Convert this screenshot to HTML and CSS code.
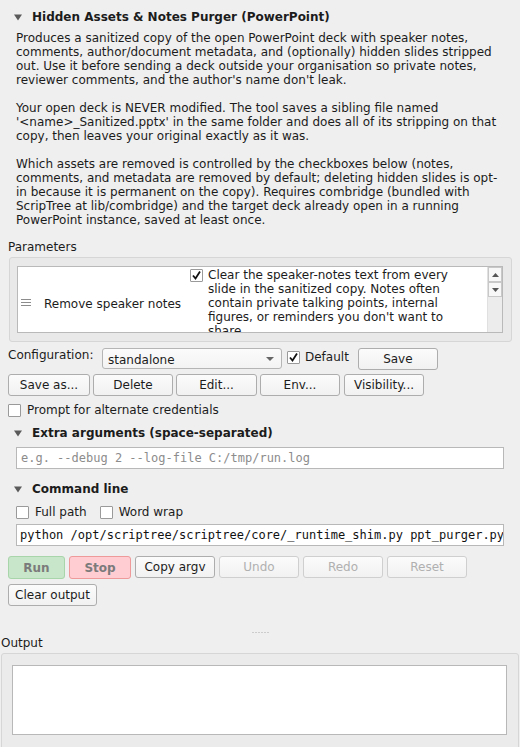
FILE: index.html
```html
<!DOCTYPE html>
<html>
<head>
<meta charset="utf-8">
<link rel="stylesheet" href="styles.css">
</head>
<body>
<div class="main">
  <div class="sec-title first">
    <svg class="tri" width="8" height="7" viewBox="0 0 8 7"><path d="M0 0.5 L8 0.5 L4 6.5 Z" fill="#5a5a5a"/></svg>
    <span>Hidden Assets &amp; Notes Purger (PowerPoint)</span>
  </div>
  <div class="desc">
    <p>Produces a sanitized copy of the open PowerPoint deck with speaker notes, comments, author/document metadata, and (optionally) hidden slides stripped out. Use it before sending a deck outside your organisation so private notes, reviewer comments, and the author's name don't leak.</p>
    <p>Your open deck is NEVER modified. The tool saves a sibling file named '&lt;name&gt;_Sanitized.pptx' in the same folder and does all of its stripping on that copy, then leaves your original exactly as it was.</p>
    <p>Which assets are removed is controlled by the checkboxes below (notes, comments, and metadata are removed by default; deleting hidden slides is opt-in because it is permanent on the copy). Requires combridge (bundled with ScripTree at lib/combridge) and the target deck already open in a running PowerPoint instance, saved at least once.</p>
  </div>

  <div class="label params-label">Parameters</div>
  <div class="group">
    <div class="table">
      <div class="row">
        <div class="handle"><svg width="10" height="8" viewBox="0 0 10 8"><path d="M0 0.5 H10 M0 3.5 H10 M0 6.5 H10" stroke="#8c8c8c" stroke-width="1"/></svg></div>
        <div class="pname">Remove speaker notes</div>
        <div class="pval">
          <span class="cb checked"><svg width="11" height="11" viewBox="0 0 11 11"><path d="M2 5.5 L4.5 8.5 L9 1.5" fill="none" stroke="#111" stroke-width="1.8"/></svg></span>
          <div class="pdesc">Clear the speaker-notes text from every slide in the sanitized copy. Notes often contain private talking points, internal figures, or reminders you don't want to share.</div>
        </div>
      </div>
      <div class="vscroll">
        <div class="sbtn"><svg width="7" height="4" viewBox="0 0 7 4"><path d="M0 4 L7 4 L3.5 0 Z" fill="#555"/></svg></div>
        <div class="sbtn"><svg width="7" height="4" viewBox="0 0 7 4"><path d="M0 0 L7 0 L3.5 4 Z" fill="#555"/></svg></div>
      </div>
    </div>
  </div>

  <div class="config-row">
    <span class="config-label">Configuration:</span>
    <div class="combo"><span>standalone</span><svg width="8" height="4" viewBox="0 0 8 4"><path d="M0 0 L8 0 L4 4 Z" fill="#666"/></svg></div>
    <label class="check default-check"><span class="cb checked"><svg width="11" height="11" viewBox="0 0 11 11"><path d="M2 5.5 L4.5 8.5 L9 1.5" fill="none" stroke="#111" stroke-width="1.8"/></svg></span>Default</label>
    <button class="btn w80">Save</button>
  </div>
  <div class="btn-row">
    <button class="btn w82">Save as...</button>
    <button class="btn w80">Delete</button>
    <button class="btn w81">Edit...</button>
    <button class="btn w80">Env...</button>
    <button class="btn w80 vis">Visibility...</button>
  </div>
  <label class="check prompt"><span class="cb"></span>Prompt for alternate credentials</label>

  <div class="sec-title extra">
    <svg class="tri" width="8" height="7" viewBox="0 0 8 7"><path d="M0 0.5 L8 0.5 L4 6.5 Z" fill="#5a5a5a"/></svg>
    <span>Extra arguments (space-separated)</span>
  </div>
  <div class="input placeholder">e.g. --debug 2 --log-file C:/tmp/run.log</div>

  <div class="sec-title cmd">
    <svg class="tri" width="8" height="7" viewBox="0 0 8 7"><path d="M0 0.5 L8 0.5 L4 6.5 Z" fill="#5a5a5a"/></svg>
    <span>Command line</span>
  </div>
  <div class="cmd-checks">
    <label class="check"><span class="cb"></span>Full path</label>
    <label class="check"><span class="cb"></span>Word wrap</label>
  </div>
  <div class="input cmdline">python /opt/scriptree/scriptree/core/_runtime_shim.py ppt_purger.py</div>

  <div class="run-row">
    <button class="btn run">Run</button>
    <button class="btn stop">Stop</button>
    <button class="btn w80">Copy argv</button>
    <button class="btn w80 disabled">Undo</button>
    <button class="btn w80 disabled">Redo</button>
    <button class="btn w80 disabled">Reset</button>
  </div>
  <div class="clear-row">
    <button class="btn clear">Clear output</button>
  </div>
</div>

<div class="splitter"><svg width="17" height="2" viewBox="0 0 17 2"><path d="M0.5 0.5 h1 M3.5 0.5 h1 M6.5 0.5 h1 M9.5 0.5 h1 M12.5 0.5 h1 M15.5 0.5 h1" stroke="#a8a8a8" stroke-width="1"/></svg></div>

<div class="output-sec">
  <div class="out-label">Output</div>
  <div class="out-group">
    <div class="out-text"></div>
  </div>
</div>
</body>
</html>
```

FILE: styles.css
```css
* { box-sizing: border-box; }
html, body { margin: 0; padding: 0; }
body {
  background: #efefef;
  font-family: "DejaVu Sans", sans-serif;
  font-size: 12px;
  line-height: 14px;
  color: #1c1c1c;
  width: 520px;
  height: 747px;
  overflow: hidden;
}
.main { padding: 0 8px; }

.sec-title {
  display: flex;
  align-items: center;
  height: 14px;
  font-weight: bold;
  padding-left: 6px;
}
.sec-title .tri { margin-right: 10px; margin-top: 1px; }
.sec-title.first { margin-top: 10px; }
.sec-title.extra { margin-top: 9px; }
.sec-title.cmd { margin-top: 13px; }

.desc { margin-top: 7px; padding: 0 8px; }
.desc p { margin: 0 0 14px 0; }
.desc p:last-child { margin-bottom: 0; }

.params-label { margin-top: 13px; height: 14px; }

.group {
  margin-top: 3px;
  margin-left: 1px;
  width: 503px;
  height: 85px;
  background: #e9e9e9;
  border: 1px solid #d6d6d6;
  border-radius: 3px;
  padding: 8px 8px 0 7px;
}
.table {
  height: 67px;
  background: #fff;
  border: 1px solid #b9b9b9;
  display: flex;
  overflow: hidden;
}
.row {
  flex: 1;
  height: 72px;
  display: flex;
  align-items: center;
}
.handle { width: 26px; padding-left: 3px; display: flex; align-items: center; }
.handle svg { display: block; }
.pname { width: 146px; margin-top: 1px; }
.pval {
  align-self: flex-start;
  display: flex;
  padding-top: 2px;
}
.pval .cb { margin-top: 0; margin-right: 5px; flex: none; }
.pdesc { width: 250px; margin-top: -1px; }

.vscroll {
  width: 15px;
  background: #ececec;
  border-left: 1px solid #e0e0e0;
  display: flex;
  flex-direction: column;
}
.sbtn {
  height: 15px;
  background: #f7f7f7;
  border: 1px solid #c8c8c8;
  display: flex;
  align-items: center;
  justify-content: center;
}
.sbtn svg { display: block; }

.cb {
  display: inline-flex;
  align-items: center;
  justify-content: center;
  width: 13px;
  height: 13px;
  background: #fff;
  border: 1px solid #9a9a9a;
  border-radius: 1px;
  flex: none;
}
.cb svg { display: block; }

.check { display: inline-flex; align-items: center; height: 14px; }
.check .cb { margin-right: 6px; }

.config-row {
  margin-top: 6px;
  display: flex;
  align-items: flex-start;
  height: 22px;
}
.config-label { width: 94px; margin-top: 0px; }
.combo {
  width: 180px;
  height: 21px;
  background: linear-gradient(#fbfbfb, #f3f3f3);
  border: 1px solid #b5b5b5;
  border-radius: 3px;
  display: flex;
  align-items: center;
  justify-content: space-between;
  padding: 0 7px 0 5px;
}
.combo span { margin-top: 2px; }
.default-check { margin-left: 5px; margin-top: 2px; }
.default-check .cb { margin-right: 5px; }
.config-row .btn { margin-left: 9px; }

.btn {
  font-family: "DejaVu Sans", sans-serif;
  font-size: 12px;
  line-height: 14px;
  color: #1c1c1c;
  height: 22px;
  padding: 0;
  background: linear-gradient(#fbfbfb, #f1f1f1);
  border: 1px solid #adadad;
  border-radius: 3px;
  text-align: center;
  flex: none;
}
.w80 { width: 80px; }
.w81 { width: 81px; }
.w82 { width: 82px; }

.btn-row { margin-top: 4px; display: flex; gap: 3px; height: 22px; }
.btn-row .btn.vis { margin-left: 1px; }

.prompt { margin-top: 7px; display: flex; }

.input {
  margin: 7px 8px 0 8px;
  height: 22px;
  background: #fff;
  border: 1px solid #b8b8b8;
  font-family: "DejaVu Sans Mono", monospace;
  font-size: 12px;
  line-height: 20px;
  padding: 0 3px;
  white-space: nowrap;
  overflow: hidden;
}
.placeholder { color: #8c8c8c; padding-left: 4px; }

.cmd-checks {
  margin-top: 9px;
  padding-left: 8px;
  display: flex;
  gap: 13px;
  height: 14px;
}
.cmdline { margin-top: 5px; color: #111; }

.run-row { margin-top: 10px; display: flex; gap: 4px; height: 23px; align-items: flex-start; }
.btn.run {
  width: 57px; height: 23px;
  background: #c8e6c9;
  border-color: #a8d5aa;
  color: #7b7b7b;
  font-weight: bold;
}
.btn.stop {
  width: 62px; height: 23px;
  background: #ffcdd2;
  border-color: #ef9a9a;
  color: #7b7b7b;
  font-weight: bold;
}
.btn.disabled { color: #b0b0b0; border-color: #cfcfcf; }

.clear-row { margin-top: 5px; height: 22px; }
.btn.clear { width: 89px; }

.splitter {
  display: flex;
  justify-content: center;
  height: 2px;
  margin-top: 26px;
  padding-left: 1px;
}
.splitter svg { display: block; }

.out-label { margin-top: 2px; height: 14px; }
.output-sec { padding: 0 1px; }
.out-group {
  margin-top: 3px;
  height: 100px;
  background: #ebebeb;
  border: 1px solid #d6d6d6;
  border-radius: 3px;
  padding: 11px 11px 0 10px;
}
.out-text {
  height: 70px;
  background: #fff;
  border: 1px solid #b8b8b8;
}
```
